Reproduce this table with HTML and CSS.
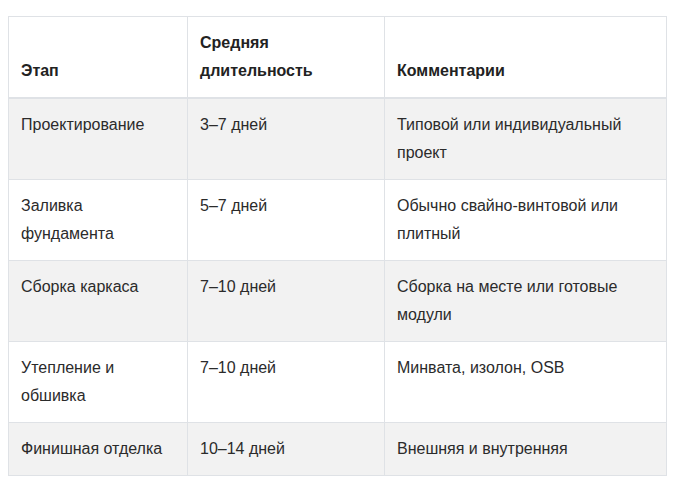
FILE: index.html
```html
<!DOCTYPE html>
<html lang="ru">
<head>
<meta charset="utf-8">
<link rel="stylesheet" href="styles.css">
</head>
<body>
<table class="stages">
  <colgroup>
    <col class="c1">
    <col class="c2">
    <col class="c3">
  </colgroup>
  <thead>
    <tr>
      <th>Этап</th>
      <th>Средняя длительность</th>
      <th>Комментарии</th>
    </tr>
  </thead>
  <tbody>
    <tr>
      <td>Проектирование</td>
      <td>3–7 дней</td>
      <td>Типовой или индивидуальный проект</td>
    </tr>
    <tr>
      <td>Заливка фундамента</td>
      <td>5–7 дней</td>
      <td>Обычно свайно-винтовой или плитный</td>
    </tr>
    <tr>
      <td>Сборка каркаса</td>
      <td>7–10 дней</td>
      <td>Сборка на месте или готовые модули</td>
    </tr>
    <tr>
      <td>Утепление и обшивка</td>
      <td>7–10 дней</td>
      <td>Минвата, изолон, OSB</td>
    </tr>
    <tr>
      <td>Финишная отделка</td>
      <td>10–14 дней</td>
      <td>Внешняя и внутренняя</td>
    </tr>
  </tbody>
</table>
</body>
</html>
```
FILE: styles.css
```css
html, body {
  background: #ffffff;
}
body {
  margin: 16px 8px 8px 8px;
  font-family: "Liberation Sans", Arial, sans-serif;
  font-size: 16px;
  line-height: 28px;
  color: #2b2b2b;
}
.stages {
  width: 658px;
  border-collapse: collapse;
  table-layout: fixed;
}
.c1 { width: 179px; }
.c2 { width: 197px; }
.c3 { width: 282px; }
.stages th,
.stages td {
  border: 1px solid #dfe2e6;
  padding: 12px 12px 12px 12px;
  text-align: left;
}
.stages th {
  font-weight: bold;
  vertical-align: bottom;
  color: #222222;
  border-bottom: 2px solid #dfe2e6;
}
.stages td {
  vertical-align: top;
}
.stages tbody tr:nth-child(odd) td {
  background: #f2f2f2;
}
```
